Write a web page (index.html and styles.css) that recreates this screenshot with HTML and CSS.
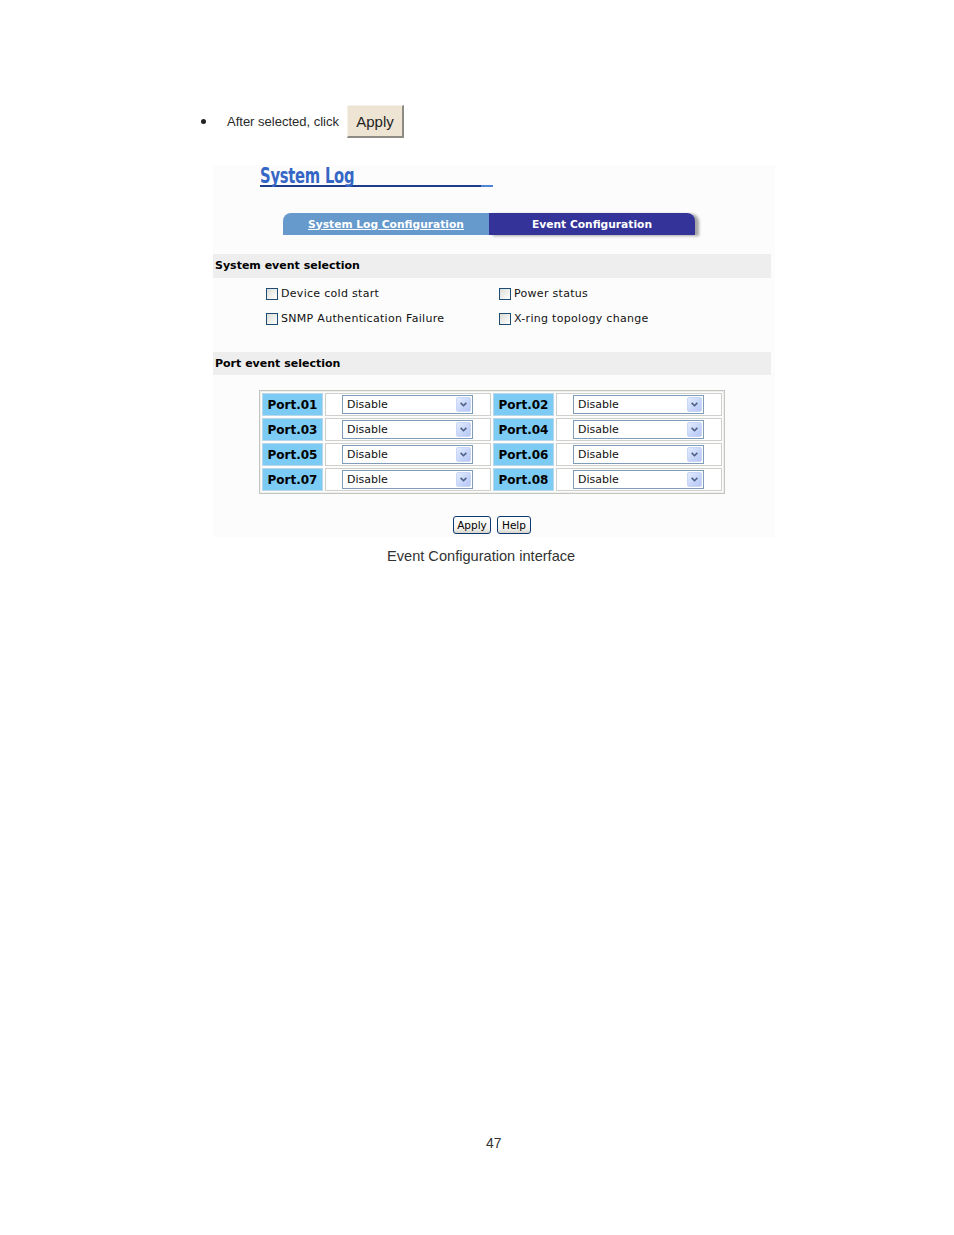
FILE: index.html
```html
<!DOCTYPE html>
<html lang="en">
<head>
<meta charset="utf-8">
<title>Event Configuration interface</title>
<link rel="stylesheet" href="styles.css">
</head>
<body>
<div class="page">
  <div class="intro">
    <span class="bullet"></span>
    <span class="intro-text">After selected, click</span>
    <span class="big-btn">Apply</span>
  </div>

  <div class="shot">
    <div class="title-wrap">
      <div class="title">System Log</div>
      <div class="title-rule"></div>
    </div>

    <div class="tabs">
      <div class="tab tab-off"><a href="#">System Log Configuration</a></div>
      <div class="tab tab-on">Event Configuration</div>
    </div>

    <div class="bar">System event selection</div>
    <div class="checks">
      <label class="check"><span class="box"></span>Device cold start</label>
      <label class="check"><span class="box"></span>Power status</label>
      <label class="check"><span class="box"></span>SNMP Authentication Failure</label>
      <label class="check"><span class="box"></span>X-ring topology change</label>
    </div>

    <div class="bar bar2">Port event selection</div>

    <div class="ports">
      <div class="port">Port.01</div>
      <div class="sel-cell"><div class="select"><span class="sel-text">Disable</span><span class="arrow"><svg viewBox="0 0 15 16" width="15" height="16"><path d="M4 6 L7.5 9.5 L11 6" fill="none" stroke="#4d6185" stroke-width="2"/></svg></span></div></div>
      <div class="port">Port.02</div>
      <div class="sel-cell"><div class="select"><span class="sel-text">Disable</span><span class="arrow"><svg viewBox="0 0 15 16" width="15" height="16"><path d="M4 6 L7.5 9.5 L11 6" fill="none" stroke="#4d6185" stroke-width="2"/></svg></span></div></div>
      <div class="port">Port.03</div>
      <div class="sel-cell"><div class="select"><span class="sel-text">Disable</span><span class="arrow"><svg viewBox="0 0 15 16" width="15" height="16"><path d="M4 6 L7.5 9.5 L11 6" fill="none" stroke="#4d6185" stroke-width="2"/></svg></span></div></div>
      <div class="port">Port.04</div>
      <div class="sel-cell"><div class="select"><span class="sel-text">Disable</span><span class="arrow"><svg viewBox="0 0 15 16" width="15" height="16"><path d="M4 6 L7.5 9.5 L11 6" fill="none" stroke="#4d6185" stroke-width="2"/></svg></span></div></div>
      <div class="port">Port.05</div>
      <div class="sel-cell"><div class="select"><span class="sel-text">Disable</span><span class="arrow"><svg viewBox="0 0 15 16" width="15" height="16"><path d="M4 6 L7.5 9.5 L11 6" fill="none" stroke="#4d6185" stroke-width="2"/></svg></span></div></div>
      <div class="port">Port.06</div>
      <div class="sel-cell"><div class="select"><span class="sel-text">Disable</span><span class="arrow"><svg viewBox="0 0 15 16" width="15" height="16"><path d="M4 6 L7.5 9.5 L11 6" fill="none" stroke="#4d6185" stroke-width="2"/></svg></span></div></div>
      <div class="port">Port.07</div>
      <div class="sel-cell"><div class="select"><span class="sel-text">Disable</span><span class="arrow"><svg viewBox="0 0 15 16" width="15" height="16"><path d="M4 6 L7.5 9.5 L11 6" fill="none" stroke="#4d6185" stroke-width="2"/></svg></span></div></div>
      <div class="port">Port.08</div>
      <div class="sel-cell"><div class="select"><span class="sel-text">Disable</span><span class="arrow"><svg viewBox="0 0 15 16" width="15" height="16"><path d="M4 6 L7.5 9.5 L11 6" fill="none" stroke="#4d6185" stroke-width="2"/></svg></span></div></div>
    </div>

    <div class="actions">
      <span class="small-btn btn-apply">Apply</span>
      <span class="small-btn btn-help">Help</span>
    </div>
  </div>

  <div class="caption">Event Configuration interface</div>

  <div class="page-num">47</div>
</div>
</body>
</html>
```

FILE: styles.css
```css
* { box-sizing: border-box; }

html, body {
  margin: 0;
  padding: 0;
  background: #ffffff;
}

body {
  font-family: "Liberation Sans", Arial, sans-serif;
  color: #222;
}

.page {
  width: 954px;
  height: 1235px;
  padding-top: 105px;
}

/* intro line */
.intro {
  display: flex;
  align-items: center;
  height: 33px;
  padding-left: 201px;
}

.bullet {
  width: 5px;
  height: 5px;
  border-radius: 50%;
  background: #222;
  margin-right: 21px;
}

.intro-text {
  font-size: 13px;
  color: #2a2a2a;
}

.big-btn {
  margin-left: 8px;
  width: 57px;
  height: 33px;
  display: flex;
  align-items: center;
  justify-content: center;
  font-size: 15px;
  color: #222;
  background: #ede4d3;
  border-top: 1px solid #f6f1e8;
  border-left: 1px solid #f6f1e8;
  border-right: 2px solid #8e8a84;
  border-bottom: 2px solid #8e8a84;
}

/* screenshot area */
.shot {
  margin-top: 27px;
  margin-left: 213px;
  width: 562px;
  height: 372px;
  background: #fcfcfc;
  font-family: "DejaVu Sans", Verdana, sans-serif;
  font-size: 11px;
  color: #000;
}

.title-wrap {
  padding-left: 47px;
  padding-top: 3px;
}

.title {
  font-family: "DejaVu Sans Condensed", "DejaVu Sans", sans-serif;
  font-weight: bold;
  font-size: 21px;
  line-height: 17px;
  height: 17px;
  color: #3466c5;
  letter-spacing: -0.3px;
  transform: scaleX(0.78);
  transform-origin: left center;
  white-space: nowrap;
}

.title-rule {
  width: 233px;
  height: 2px;
  background: linear-gradient(to right, #1e3d8c 0, #1e3d8c 221px, #4f85d6 221px);
}

/* tabs */
.tabs {
  display: flex;
  margin-top: 26px;
  padding-left: 70px;
  height: 22px;
}

.tab {
  width: 206px;
  height: 22px;
  display: flex;
  align-items: center;
  justify-content: center;
  font-weight: bold;
  font-size: 10.7px;
  color: #fff;
}

.tab-off {
  background: #6699cc;
  border-top-left-radius: 8px;
}

.tab-off a {
  color: #fff;
  text-decoration: underline;
}

.tab-on {
  background: #333399;
  border-top-right-radius: 8px;
  box-shadow: 4px 1px 3px rgba(0, 0, 0, 0.35);
}

/* section bars */
.bar {
  margin-top: 19px;
  width: 558px;
  height: 24px;
  background: #eeeeee;
  font-weight: bold;
  font-size: 11px;
  line-height: 24px;
  padding-left: 2px;
}

.bar2 {
  margin-top: 21px;
  height: 23px;
  line-height: 23px;
}

/* checkboxes */
.checks {
  display: grid;
  grid-template-columns: 233px 220px;
  grid-auto-rows: 25px;
  padding-left: 53px;
  padding-top: 3px;
}

.check {
  display: flex;
  align-items: center;
  font-size: 11px;
  color: #111;
  letter-spacing: 0.3px;
}

.box {
  width: 12px;
  height: 12px;
  margin-right: 3px;
  border: 1px solid #1f4c73;
  background: linear-gradient(135deg, #dcdcd7 0%, #f4f4f2 70%, #ffffff 100%);
}

/* port table */
.ports {
  margin-top: 15px;
  margin-left: 46px;
  width: 466px;
  display: grid;
  grid-template-columns: 61px 166px 61px 166px;
  grid-auto-rows: 23px;
  gap: 2px;
  padding: 2px;
  border: 1px solid #c4c4c0;
  box-shadow: inset 0 0 0 1px #efefec;
}

.port {
  background: #7ccbf4;
  border: 1px solid #b8d8ea;
  display: flex;
  align-items: center;
  justify-content: center;
  font-weight: bold;
  font-size: 12px;
}

.sel-cell {
  background: #ffffff;
  border: 1px solid #cfcfcb;
  display: flex;
  align-items: center;
  padding-left: 16px;
}

.select {
  width: 131px;
  height: 19px;
  border: 1px solid #7f9db9;
  background: #fff;
  display: flex;
  align-items: center;
  justify-content: space-between;
  padding: 1px;
}

.sel-text {
  padding-left: 3px;
  font-size: 11px;
  color: #111;
}

.arrow {
  width: 15px;
  height: 15px;
  display: flex;
  align-items: center;
  justify-content: center;
  background: linear-gradient(135deg, #e3ebfd 0%, #c5d4f9 60%, #b6c7f3 100%);
  border-radius: 2px;
  border: 1px solid #c8d6f7;
}

.arrow svg {
  width: 13px;
  height: 13px;
}

/* action buttons */
.actions {
  display: flex;
  gap: 6px;
  margin-top: 22px;
  padding-left: 240px;
}

.small-btn {
  height: 18px;
  display: flex;
  align-items: center;
  justify-content: center;
  border: 1px solid #0b3a73;
  border-radius: 3px;
  background: linear-gradient(to bottom, #ffffff 0%, #f3f3ef 70%, #d8d5cc 100%);
  font-size: 10.5px;
  color: #000;
}

.btn-apply { width: 38px; }
.btn-help { width: 34px; }

/* caption */
.caption {
  margin-top: 11px;
  padding-left: 387px;
  font-size: 14.6px;
  line-height: 16px;
  color: #333;
}

.page-num {
  margin-top: 571px;
  padding-left: 486px;
  font-size: 14px;
  line-height: 16px;
  color: #333;
}
```
